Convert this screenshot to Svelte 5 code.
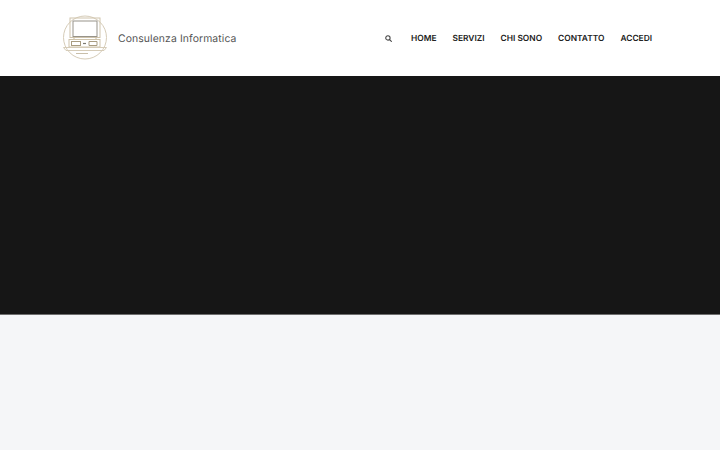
<script>
  const links = ['HOME', 'SERVIZI', 'CHI SONO', 'CONTATTO', 'ACCEDI'];
</script>

<div class="page">
  <header class="header">
    <div class="brand">
      <svg class="logo" viewBox="0 0 46 46" width="46" height="46" fill="none" stroke="#c9bb9e" stroke-width="1">
        <circle cx="23" cy="22.5" r="21.5" stroke="#d6ccb8" />
        <rect x="8" y="3" width="30" height="19.5" stroke="#cfc4ac" />
        <rect x="11" y="6" width="24" height="15.5" stroke="#97938a" />
        <path d="M12 22.5v2M34 22.5v2" />
        <rect x="7" y="24.5" width="31" height="7.5" stroke="#cfc4ac" />
        <rect x="9.5" y="26.5" width="9" height="4" stroke="#a89b80" />
        <path d="M21 28.5h3" stroke="#7d7a72" stroke-width="1.2" />
        <path d="M27 26.5h8v4h-8z" stroke="#a89b80" />
        <path d="M1.5 32.5h43l-2.5 3h-38z" stroke="#d6ccb8" />
        <path d="M14 38.5h12" stroke="#c9bfaa" />
      </svg>
      <span class="name">Consulenza Informatica</span>
    </div>
    <nav class="nav">
      <svg class="search" viewBox="0 0 24 24" width="7" height="7" fill="none" stroke="#444" stroke-width="3.6">
        <circle cx="10" cy="10" r="7.5" />
        <path d="M15.5 15.5l7.5 7.5" />
      </svg>
      <ul class="links">
        {#each links as link}
          <li>{link}</li>
        {/each}
      </ul>
    </nav>
  </header>
  <section class="hero"></section>
  <section class="below"></section>
</div>

<style>
  :global(body) {
    margin: 0;
    font-family: "Inter", "Liberation Sans", sans-serif;
    text-rendering: geometricPrecision;
  }
  .page {
    display: flex;
    flex-direction: column;
    height: 450px;
    overflow: hidden;
  }
  .header {
    display: flex;
    align-items: center;
    justify-content: space-between;
    height: 76px;
    padding: 0 68px 0 62px;
    background: #fff;
    flex: none;
  }
  .brand {
    display: flex;
    align-items: center;
    gap: 10px;
  }
  .logo {
    display: block;
  }
  .name {
    font-size: 10.4px;
    color: #555;
    letter-spacing: 0.1px;
  }
  .nav {
    display: flex;
    align-items: center;
    gap: 19px;
  }
  .search {
    display: block;
    margin-top: 1px;
  }
  .links {
    display: flex;
    gap: 16px;
    margin: 0;
    padding: 2px 0 0;
    list-style: none;
  }
  .links li {
    font-size: 8.4px;
    font-weight: 600;
    color: #222;
  }
  .hero {
    height: 238px;
    background: #161616;
    border-bottom: 1px solid #6e6e6e;
    flex: none;
  }
  .below {
    flex: 1;
    background: #f5f6f8;
  }
</style>
